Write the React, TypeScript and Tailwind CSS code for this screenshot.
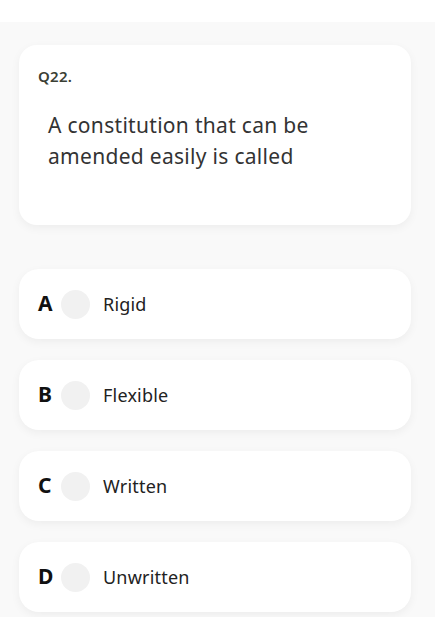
import React, { useState } from 'react'

const options = [
  { key: 'A', label: 'Rigid' },
  { key: 'B', label: 'Flexible' },
  { key: 'C', label: 'Written' },
  { key: 'D', label: 'Unwritten' },
]

const App = () => {
  const [picked, setPicked] = useState<string | null>(null)

  return (
    <div className="min-h-[617px] bg-white" style={{ fontFamily: '"Noto Sans", "Open Sans", sans-serif' }}>
      <div className="h-[22px] bg-white" />
      <div className="bg-[#f9f9f9] pl-[19px] pr-[24px] pt-[23px] pb-[5px] min-h-[595px]">
        <div className="h-[180px] rounded-[18px] bg-white shadow-[0_3px_10px_rgba(0,0,0,0.05)] px-[19px] pt-[22px]">
          <p className="text-[15px] font-semibold tracking-[0.3px] text-[#3b4035] leading-[18px]">Q22.</p>
          <p className="mt-[25px] pl-[10px] text-[21px] tracking-[0.3px] leading-[31px] text-[#333]">
            A constitution that can be
            <br />
            amended easily is called
          </p>
        </div>

        <div className="mt-[44px] flex flex-col gap-[21px]">
          {options.map((opt) => (
            <button
              key={opt.key}
              onClick={() => setPicked(opt.key)}
              className="h-[70px] w-full rounded-[20px] bg-white shadow-[0_3px_10px_rgba(0,0,0,0.05)] flex items-center pl-[19px] text-left"
            >
              <span className="w-[23px] text-[21px] font-bold text-[#111]">{opt.key}</span>
              <span
                className={
                  picked === opt.key
                    ? 'w-[29px] h-[29px] rounded-full bg-[#c9e3c0]'
                    : 'w-[29px] h-[29px] rounded-full bg-[#f1f1f1]'
                }
              />
              <span className="ml-[13px] text-[18px] tracking-[0.2px] text-[#222]">{opt.label}</span>
            </button>
          ))}
        </div>
      </div>
    </div>
  )
}

export default App
